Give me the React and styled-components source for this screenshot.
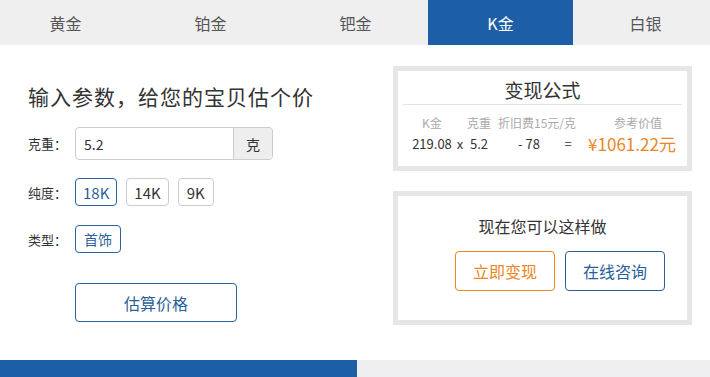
import styled, { createGlobalStyle } from "styled-components";

const GlobalStyle = createGlobalStyle`
  html, body {
    margin: 0;
    padding: 0;
    background: #ffffff;
    font-family: "Noto Sans CJK SC", "Noto Sans", sans-serif;
    color: #333;
  }
  * { box-sizing: border-box; }
`;

const BLUE = "#1d5fa6";
const ORANGE = "#ec8624";

const Page = styled.div`
  width: 710px;
  height: 377px;
  overflow: hidden;
  display: flex;
  flex-direction: column;
`;

const TabBar = styled.div`
  height: 45px;
  background: #efeff0;
  display: flex;
  margin-left: -7px;
`;

const Tab = styled.div`
  flex: 0 0 145px;
  height: 45px;
  display: flex;
  align-items: center;
  justify-content: center;
  font-size: 16px;
  color: ${(p) => (p.$active ? "#fff" : "#555")};
  background: ${(p) => (p.$active ? BLUE : "transparent")};
`;

const Main = styled.div`
  flex: 0 0 315px;
  display: flex;
  gap: 36px;
`;

const LeftCol = styled.div`
  width: 357px;
  padding-left: 28px;
  display: flex;
  flex-direction: column;
`;

const Title = styled.h2`
  margin: 36px 0 0;
  font-size: 21px;
  font-weight: normal;
  line-height: 30px;
  color: #333;
  letter-spacing: 1px;
`;

const Field = styled.div`
  display: flex;
  align-items: center;
  margin-top: ${(p) => p.$top}px;
`;

const Label = styled.span`
  width: 47px;
  font-size: 13px;
  color: #333;
`;

const InputGroup = styled.div`
  display: flex;
  width: 198px;
  height: 33px;
  border: 1px solid #ccc;
  border-radius: 4px;
  overflow: hidden;
`;

const Input = styled.div`
  flex: 1;
  padding-left: 8px;
  display: flex;
  align-items: center;
  font-size: 14px;
  color: #333;
`;

const Addon = styled.div`
  width: 39px;
  border-left: 1px solid #ccc;
  background: #eeeeef;
  display: flex;
  align-items: center;
  justify-content: center;
  font-size: 14px;
  color: #333;
`;

const Options = styled.div`
  display: flex;
  gap: 9px;
`;

const Option = styled.div`
  height: 28px;
  padding: 0 ${(p) => p.$pad || 7}px;
  border: 1px solid ${(p) => (p.$active ? "#2a63a0" : "#ccc")};
  border-radius: 4px;
  display: flex;
  align-items: center;
  font-size: ${(p) => p.$size || 15}px;
  color: ${(p) => (p.$active ? "#2a5f99" : "#333")};
`;

const EstimateButton = styled.div`
  margin: 30px 0 0 47px;
  width: 162px;
  height: 39px;
  border: 1px solid #2a63a0;
  border-radius: 4px;
  display: flex;
  align-items: center;
  justify-content: center;
  font-size: 16px;
  color: #2a5f99;
`;

const RightCol = styled.div`
  width: 299px;
  padding-top: 21px;
  display: flex;
  flex-direction: column;
  gap: 20px;
`;

const Box = styled.div`
  height: ${(p) => p.$h}px;
  border: 5px solid #e6e6e9;
  background: #fff;
  display: flex;
  flex-direction: column;
`;

const BoxTitle = styled.div`
  margin-top: 7px;
  text-align: center;
  font-size: 19px;
  line-height: 24px;
  color: #333;
`;

const Divider = styled.div`
  margin: 2px 5px 0;
  height: 1px;
  background: #e3e3e3;
`;

const FormulaRow = styled.div`
  display: flex;
  padding-left: ${(p) => p.$pad}px;
  margin-top: ${(p) => p.$top}px;
  height: ${(p) => p.$h}px;
  align-items: center;
`;

const Cell = styled.div`
  flex: 0 0 ${(p) => p.$w}px;
  display: flex;
  justify-content: center;
  white-space: nowrap;
  font-size: ${(p) => p.$size || 13}px;
  color: ${(p) => p.$color || "#333"};
`;

const Hint = styled.div`
  margin-top: 19px;
  text-align: center;
  font-size: 16px;
  line-height: 22px;
  color: #333;
`;

const Actions = styled.div`
  display: flex;
  gap: 10px;
  margin: 14px 0 0 57px;
`;

const ActionButton = styled.div`
  width: 100px;
  height: 40px;
  border: 1px solid ${(p) => p.$color};
  border-radius: 4px;
  display: flex;
  align-items: center;
  justify-content: center;
  font-size: 16px;
  color: ${(p) => p.$color};
`;

const Bottom = styled.div`
  flex: 1;
  display: flex;
`;

const BottomTab = styled.div`
  width: ${(p) => p.$w}px;
  background: ${(p) => (p.$active ? BLUE : "#efeff1")};
`;

const tabs = ["黄金", "铂金", "钯金", "K金", "白银"];

export default function App() {
  return (
    <Page>
      <GlobalStyle />
      <TabBar>
        {tabs.map((t) => (
          <Tab key={t} $active={t === "K金"}>
            {t}
          </Tab>
        ))}
      </TabBar>
      <Main>
        <LeftCol>
          <Title>输入参数，给您的宝贝估个价</Title>
          <Field $top={16}>
            <Label>克重：</Label>
            <InputGroup>
              <Input>5.2</Input>
              <Addon>克</Addon>
            </InputGroup>
          </Field>
          <Field $top={18}>
            <Label>纯度：</Label>
            <Options>
              <Option $active>18K</Option>
              <Option>14K</Option>
              <Option $pad={8}>9K</Option>
            </Options>
          </Field>
          <Field $top={19}>
            <Label>类型：</Label>
            <Options>
              <Option $active $size={14} $pad={8}>
                首饰
              </Option>
            </Options>
          </Field>
          <EstimateButton>估算价格</EstimateButton>
        </LeftCol>
        <RightCol>
          <Box $h={105}>
            <BoxTitle>变现公式</BoxTitle>
            <Divider />
            <FormulaRow $pad={6} $top={9} $h={16}>
              <Cell $w={56} $size={12} $color="#aaa">K金</Cell>
              <Cell $w={38} $size={12} $color="#aaa">克重</Cell>
              <Cell $w={70} $size={12} $color="#aaa">折旧费15元/克</Cell>
              <Cell $w={124} $size={12} $color="#aaa">参考价值</Cell>
            </FormulaRow>
            <FormulaRow $pad={10} $top={3} $h={20}>
              <Cell $w={48}>219.08</Cell>
              <Cell $w={8}>x</Cell>
              <Cell $w={30}>5.2</Cell>
              <Cell $w={70}>- 78</Cell>
              <Cell $w={8}>=</Cell>
              <Cell $w={120} $size={17} $color={ORANGE}>
                ¥1061.22元
              </Cell>
            </FormulaRow>
          </Box>
          <Box $h={134}>
            <Hint>现在您可以这样做</Hint>
            <Actions>
              <ActionButton $color={ORANGE}>立即变现</ActionButton>
              <ActionButton $color="#2a5f99">在线咨询</ActionButton>
            </Actions>
          </Box>
        </RightCol>
      </Main>
      <Bottom>
        <BottomTab $active $w={357} />
        <BottomTab $w={353} />
      </Bottom>
    </Page>
  );
}
